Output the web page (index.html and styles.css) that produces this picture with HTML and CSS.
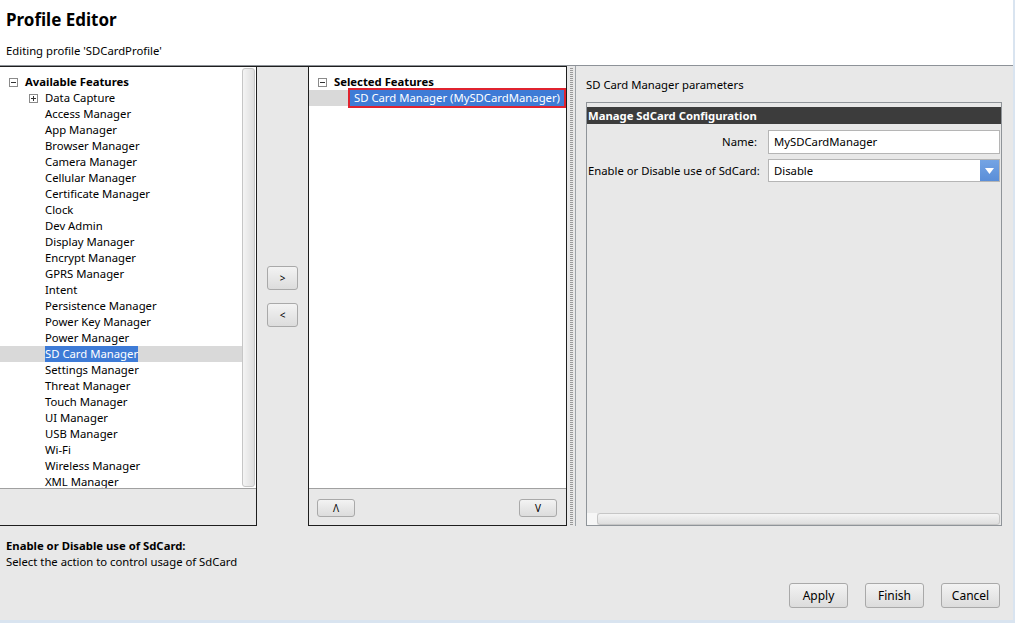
FILE: index.html
```html
<!DOCTYPE html>
<html lang="en">
<head>
    <meta charset="UTF-8">
    <meta name="viewport" content="width=device-width, initial-scale=1.0">
    <title>Profile Editor</title>
    <link rel="stylesheet" href="styles.css">
</head>
<body>
<div class="window">
    <div class="head">
        <h1>Profile Editor</h1>
        <p>Editing profile 'SDCardProfile'</p>
    </div>

    <div class="main">
        <!-- available features -->
        <div class="panel left">
            <div class="tree">
                <div class="list">
                    <div class="row"><span class="tog"><svg width="9" height="9" viewBox="0 0 9 9"><rect x="0.5" y="0.5" width="8" height="8" fill="#fff" stroke="#8a8a8a"/><path d="M2 4.5h5" stroke="#333"/></svg></span><b>Available Features</b></div>
                    <div class="kids">
                        <div class="row"><span class="tog"><svg width="9" height="9" viewBox="0 0 9 9"><rect x="0.5" y="0.5" width="8" height="8" fill="#fff" stroke="#8a8a8a"/><path d="M2 4.5h5M4.5 2v5" stroke="#333"/></svg></span>Data Capture</div>
                        <div class="row"><span class="tog"></span>Access Manager</div>
                        <div class="row"><span class="tog"></span>App Manager</div>
                        <div class="row"><span class="tog"></span>Browser Manager</div>
                        <div class="row"><span class="tog"></span>Camera Manager</div>
                        <div class="row"><span class="tog"></span>Cellular Manager</div>
                        <div class="row"><span class="tog"></span>Certificate Manager</div>
                        <div class="row"><span class="tog"></span>Clock</div>
                        <div class="row"><span class="tog"></span>Dev Admin</div>
                        <div class="row"><span class="tog"></span>Display Manager</div>
                        <div class="row"><span class="tog"></span>Encrypt Manager</div>
                        <div class="row"><span class="tog"></span>GPRS Manager</div>
                        <div class="row"><span class="tog"></span>Intent</div>
                        <div class="row"><span class="tog"></span>Persistence Manager</div>
                        <div class="row"><span class="tog"></span>Power Key Manager</div>
                        <div class="row"><span class="tog"></span>Power Manager</div>
                        <div class="row sel"><span class="tog"></span><span class="hl">SD Card Manager</span></div>
                        <div class="row"><span class="tog"></span>Settings Manager</div>
                        <div class="row"><span class="tog"></span>Threat Manager</div>
                        <div class="row"><span class="tog"></span>Touch Manager</div>
                        <div class="row"><span class="tog"></span>UI Manager</div>
                        <div class="row"><span class="tog"></span>USB Manager</div>
                        <div class="row"><span class="tog"></span>Wi-Fi</div>
                        <div class="row"><span class="tog"></span>Wireless Manager</div>
                        <div class="row"><span class="tog"></span>XML Manager</div>
                    </div>
                </div>
                <div class="vscroll"></div>
            </div>
            <div class="foot"></div>
        </div>

        <div class="mover">
            <button class="btn small">&gt;</button>
            <button class="btn small">&lt;</button>
        </div>

        <!-- selected features -->
        <div class="panel mid">
            <div class="tree">
                <div class="list">
                    <div class="row"><span class="tog"><svg width="9" height="9" viewBox="0 0 9 9"><rect x="0.5" y="0.5" width="8" height="8" fill="#fff" stroke="#8a8a8a"/><path d="M2 4.5h5" stroke="#333"/></svg></span><b>Selected Features</b></div>
                    <div class="kids">
                        <div class="row sel"><span class="tog"></span><span class="picked">SD Card Manager (MySDCardManager)</span></div>
                    </div>
                </div>
            </div>
            <div class="foot order">
                <button class="btn tiny">&#923;</button>
                <button class="btn tiny">V</button>
            </div>
        </div>

        <div class="splitter"></div>

        <div class="params">
            <div class="params-title">SD Card Manager parameters</div>
            <div class="group">
                <div class="group-head">Manage SdCard Configuration</div>
                <div class="form">
                    <label>Name:</label>
                    <div class="field">MySDCardManager</div>
                    <label>Enable or Disable use of SdCard:</label>
                    <div class="field combo">
                        <span>Disable</span>
                        <span class="drop"><svg width="9" height="6" viewBox="0 0 9 6"><path d="M0 0h9L4.5 6z" fill="#fff"/></svg></span>
                    </div>
                </div>
                <div class="hscroll">
                    <div class="corner"></div>
                    <div class="track"></div>
                </div>
            </div>
        </div>
    </div>

    <div class="bottom">
        <div class="help">
            <b>Enable or Disable use of SdCard:</b>
            <div>Select the action to control usage of SdCard</div>
        </div>
        <div class="actions">
            <button class="btn wide">Apply</button>
            <button class="btn wide">Finish</button>
            <button class="btn wide">Cancel</button>
        </div>
    </div>
</div>
</body>
</html>
```

FILE: styles.css
```css
*{
    box-sizing: border-box;
}
body{
    margin: 0;
    background: #d9e4f0;
    font-family: "Noto Sans", "Open Sans", sans-serif;
    font-size: 11.3px;
    color: #000;
}
.window{
    width: 1013px;
    height: 620px;
    background: #e8e8e8;
    display: flex;
    flex-direction: column;
}
.head{
    height: 66px;
    background: #fff;
    border-bottom: 1px solid #8d9298;
    padding-left: 6px;
}
.head h1{
    margin: 0;
    padding-top: 10px;
    font-size: 17px;
    line-height: 20px;
    font-weight: bold;
}
.head p{
    margin: 13px 0 0;
    line-height: 16px;
}
.main{
    display: flex;
    height: 460px;
}
.panel{
    display: flex;
    flex-direction: column;
    border-top: 1px solid #1e1e1e;
    border-bottom: 1px solid #1e1e1e;
}
.left{
    width: 257px;
    border-right: 1px solid #1e1e1e;
}
.mid{
    width: 259px;
    border-left: 1px solid #1e1e1e;
    border-right: 1px solid #1e1e1e;
}
.tree{
    height: 422px;
    background: #fff;
    border-bottom: 1px solid #a0a0a0;
    display: flex;
    overflow: hidden;
}
.list{
    flex: 1;
    padding-top: 7px;
    overflow: hidden;
}
.row{
    display: flex;
    align-items: center;
    height: 16px;
    line-height: 16px;
    padding-left: 9px;
    white-space: nowrap;
}
.tog{
    width: 9px;
    height: 9px;
    margin-right: 7px;
    flex: none;
    display: flex;
}
.kids .row{
    padding-left: 29px;
}
.row.sel{
    background: #d9d9d9;
}
.hl{
    background: #3e7bd6;
    color: #fff;
}
.picked{
    background: #3e7bd6;
    color: #fff;
    border: 2px solid #e0232f;
    margin-left: -6px;
    padding: 0 4px;
    height: 20px;
    line-height: 16px;
    margin-top: -2px;
    margin-bottom: -2px;
}
.vscroll{
    width: 13px;
    margin: 1px 1px 1px 0;
    border: 1px solid #c6c6c6;
    border-radius: 3px;
    background: linear-gradient(to right, #f4f4f4, #dedede);
}
.foot{
    flex: 1;
}
.order{
    display: flex;
    justify-content: space-between;
    align-items: flex-start;
    padding: 10px 9px 0 8px;
}
.mover{
    width: 51px;
    border-top: 1px solid #1e1e1e;
    display: flex;
    flex-direction: column;
    gap: 13px;
    padding: 199px 0 0 10px;
}
.btn{
    font-family: inherit;
    font-size: 12px;
    color: #000;
    border: 1px solid #a9a9a9;
    border-radius: 3px;
    background: linear-gradient(#f3f3f3, #dcdcdc);
    padding: 0;
}
.small{
    width: 31px;
    height: 24px;
    font-size: 10px;
}
.tiny{
    width: 38px;
    height: 18px;
    font-size: 10px;
    line-height: 14px;
}
.wide{
    width: 59px;
    height: 25px;
}
.splitter{
    width: 8px;
    border-top: 1px solid #e8e8e8;
    background: repeating-linear-gradient(#e8e8e8 0 1px, #9a9a9a 1px 2px) 3px 0 / 3px 100% no-repeat;
}
.params{
    flex: 1;
    display: flex;
    flex-direction: column;
    border-left: 1px solid #9ea3a8;
    padding: 11px 11px 0 10px;
}
.params-title{
    line-height: 16px;
}
.group{
    flex: 1;
    margin-top: 9px;
    border: 1px solid #8f9499;
    border-bottom: none;
    padding-top: 4px;
    display: flex;
    flex-direction: column;
}
.group-head{
    height: 17px;
    line-height: 17px;
    background: #3c3c3c;
    color: #fff;
    font-weight: bold;
    padding-left: 1px;
}
.form{
    display: grid;
    grid-template-columns: 180px 232px;
    row-gap: 5px;
    padding: 6px 0 0 1px;
}
.form label{
    text-align: right;
    padding-right: 11px;
    line-height: 24px;
    white-space: nowrap;
}
.field{
    height: 24px;
    line-height: 22px;
    background: #fff;
    border: 1px solid #b5b5b5;
    padding-left: 5px;
}
.combo{
    display: flex;
    justify-content: space-between;
    height: 23px;
    line-height: 21px;
    padding-right: 0;
}
.drop{
    width: 19px;
    background: linear-gradient(#74a4e4, #5a8ed8);
    display: flex;
    align-items: center;
    justify-content: center;
}
.hscroll{
    margin-top: auto;
    height: 13px;
    display: flex;
    border-bottom: 1px solid #8f9499;
}
.corner{
    width: 10px;
    background: #f6f6f6;
}
.track{
    flex: 1;
    margin-right: 1px;
    border: 1px solid #c6c6c6;
    border-radius: 3px;
    background: linear-gradient(#f4f4f4, #dedede);
}
.bottom{
    flex: 1;
    padding: 12px 0 0 6px;
}
.help{
    line-height: 16px;
}
.actions{
    display: flex;
    justify-content: flex-end;
    gap: 17px;
    margin-top: 13px;
    padding-right: 13px;
}
```
